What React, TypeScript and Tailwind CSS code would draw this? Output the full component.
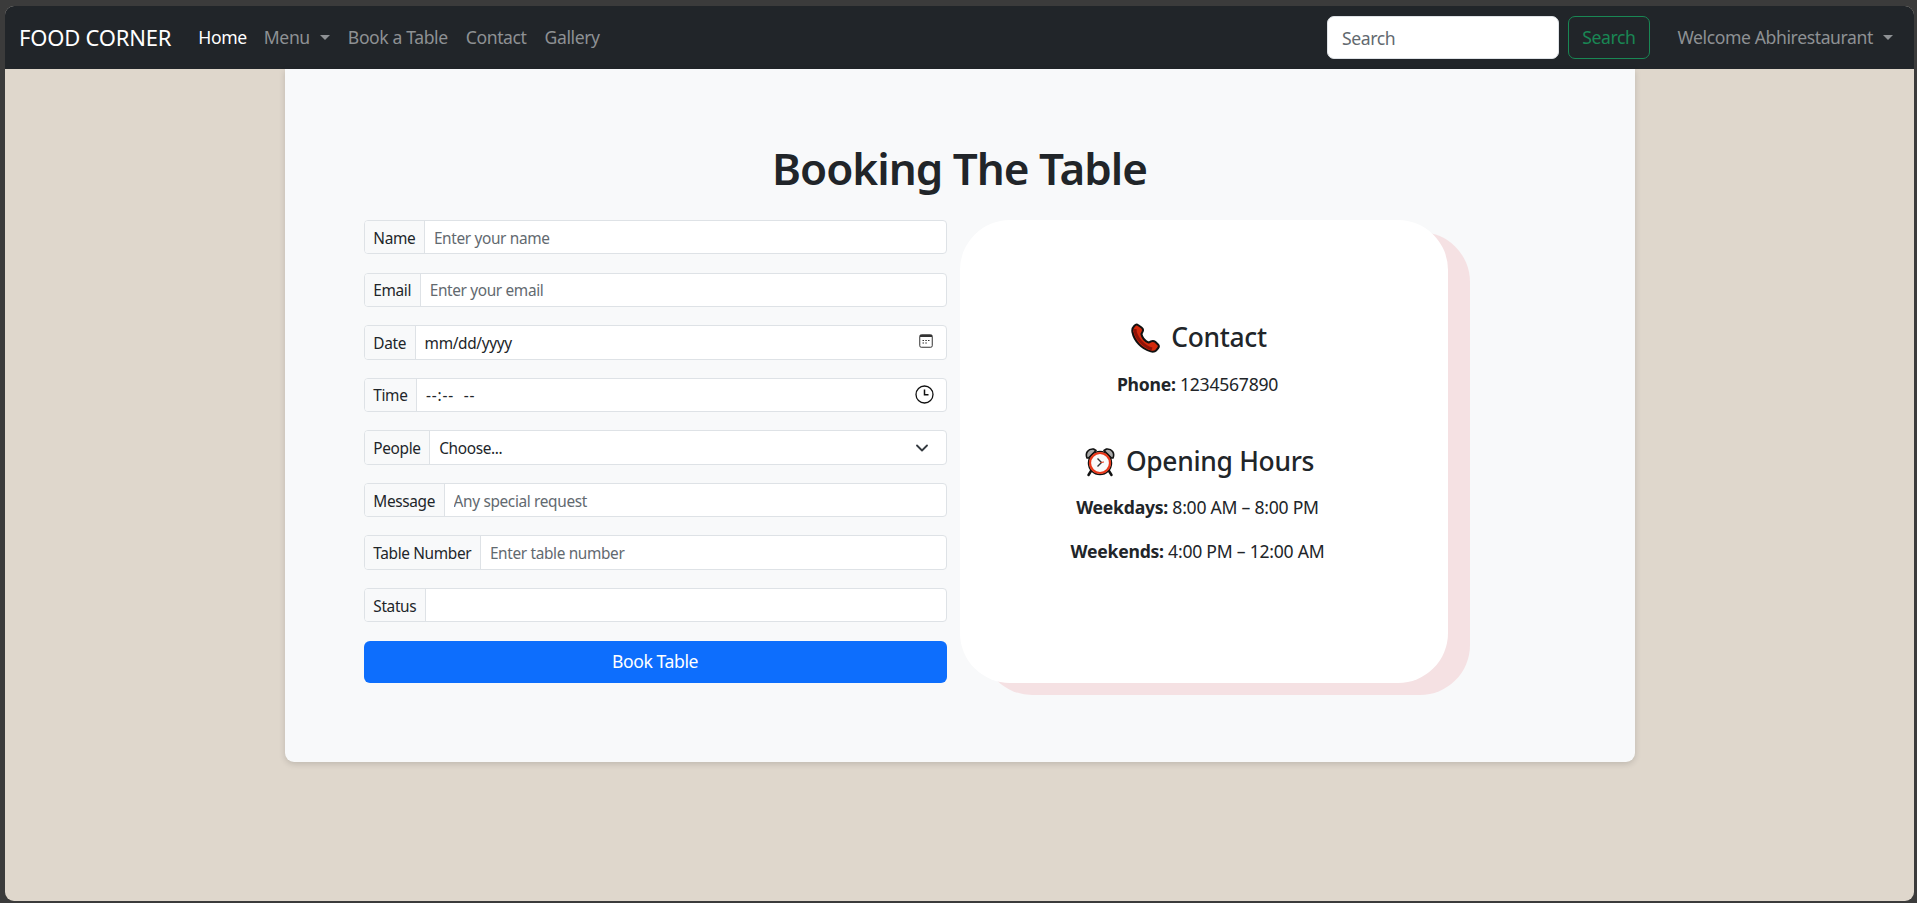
const font = "font-['Noto_Sans',sans-serif]"

const PhoneEmoji = () => (
  <svg width="29" height="30" viewBox="0 0 29 30" className="shrink-0">
    <path d="M7 2 L10.5 4.5 C12 5.6 12.4 7 11.6 8.6 L10.4 11 C11.2 14.8 14 18 17.6 19.6 L20 18.4 C21.6 17.6 23 17.8 24.2 18.8 L27 21.4 C28 22.4 28 23.8 27.2 25 L25.4 27.2 C24 28.6 22 29 19.8 28.4 C10.6 25.8 3.2 18 1.4 9 C1 6.6 1.6 4.6 3.2 3 L4.4 2 C5.2 1.4 6.2 1.4 7 2 Z" fill="#d42a0c" stroke="#111" strokeWidth="2" strokeLinejoin="round" />
    <path d="M4 6 C4 14 12 23 21 26" fill="none" stroke="#8e1208" strokeWidth="3" />
  </svg>
)

const ClockEmoji = () => (
  <svg width="30" height="30" viewBox="0 0 30 30" className="shrink-0">
    <path d="M2 11 C0 6 3 1.5 8.5 2 L11 3.5 L3.5 11 Z" fill="#a9a9a9" stroke="#111" strokeWidth="1.6" strokeLinejoin="round" />
    <path d="M28 11 C30 6 27 1.5 21.5 2 L19 3.5 L26.500 11 Z" fill="#a9a9a9" stroke="#111" strokeWidth="1.6" strokeLinejoin="round" />
    <path d="M6 24 L3.500 28 M24 24 L26.500 28" stroke="#111" strokeWidth="2.500" strokeLinecap="round" />
    <circle cx="15" cy="16" r="11.500" fill="#ffffff" stroke="#111" strokeWidth="1.500" />
    <circle cx="15" cy="16" r="10" fill="#fafafa" stroke="#e8381a" strokeWidth="2.200" />
    <path d="M12.500 11.500 L16.500 15.500 L12.500 19.500" fill="none" stroke="#333" strokeWidth="1.400" />
    <path d="M15.500 15.500 L19 15" stroke="#e8381a" strokeWidth="1" />
  </svg>
)

const CalendarIcon = () => (
  <svg width="14" height="14" viewBox="0 0 14 14" className="shrink-0 -mt-[3px]" fill="none">
    <rect x="0.75" y="0.75" width="12.5" height="12.5" rx="1.5" stroke="#333" strokeWidth="1" />
    <rect x="1" y="1" width="12" height="2" fill="#333" />
    <path d="M3.500 6.500h1.500M6.300 6.500h1.500M9 6.500h1.500M3.500 9h1.500M6.300 9h1.500" stroke="#333" strokeWidth="1.200" />
  </svg>
)

const ClockIcon = () => (
  <svg width="19" height="19" viewBox="0 0 19 19" className="shrink-0" fill="none">
    <circle cx="9.500" cy="9.500" r="8.500" stroke="#111" strokeWidth="1.300" />
    <path d="M9.500 4.500v5.300h4" stroke="#111" strokeWidth="1.500" />
  </svg>
)

const Chevron = () => (
  <svg width="12" height="8" viewBox="0 0 12 8" className="shrink-0" fill="none">
    <path d="M1 1.500l5 5 5-5" stroke="#343a40" strokeWidth="1.800" strokeLinecap="round" strokeLinejoin="round" />
  </svg>
)

const Caret = ({ className = '' }: { className?: string }) => (
  <span className={`inline-block w-0 h-0 border-x-[5px] border-x-transparent border-t-[5.300px] border-t-current ${className}`} />
)

const fields = [
  { label: 'Name', placeholder: 'Enter your name' },
  { label: 'Email', placeholder: 'Enter your email' },
  { label: 'Date', value: 'mm/dd/yyyy', icon: <CalendarIcon />, pr: 'pr-[13px]' },
  { label: 'Time', value: '--:--  --', icon: <ClockIcon />, pr: 'pr-[12px]', wide: true },
  { label: 'People', value: 'Choose...', icon: <Chevron />, pr: 'pr-[18px]' },
  { label: 'Message', placeholder: 'Any special request' },
  { label: 'Table Number', placeholder: 'Enter table number' },
  { label: 'Status', placeholder: '' },
]

const Field = ({ label, placeholder, value, icon, pr, wide }: any) => (
  <div className="flex h-[34.400px] mb-[18.200px] border border-[#dee2e6] rounded-[4px] bg-white overflow-hidden text-[15.400px] tracking-[-0.35px]">
    <span className="flex items-center px-[8.800px] pt-[2px] bg-[#f8f9fa] border-r border-[#dee2e6] text-[#212529]">{label}</span>
    <div className={`flex flex-1 items-center ${pr || ''}`}>
      <input
        readOnly
        value={value || ''}
        placeholder={placeholder}
        className={`flex-1 min-w-0 h-full px-[8.800px] pt-[2px] bg-transparent outline-none text-[#212529] placeholder:text-[#62696f] whitespace-pre ${wide ? 'tracking-[0.8px]' : ''}`}
      />
      {icon}
    </div>
  </div>
)

export default function App() {
  return (
    <div className={`${font} h-screen bg-[#3b3b3b] pt-[6px] pl-[5px] pr-[3px] pb-[2px]`}>
      <div className="h-full flex flex-col bg-[#dfd7cc] rounded-[9px] overflow-hidden">
        <nav className="flex items-center h-[63px] shrink-0 bg-[#212529] pl-[14px] pr-[21px] text-[17.600px] tracking-[-0.4px] text-[#8e9194]">
          <a className="text-white text-[22px] tracking-[-0.2px] mr-[27px]">FOOD CORNER</a>
          <a className="text-white mr-[17px]">Home</a>
          <a className="flex items-center mr-[18px]">Menu<Caret className="ml-[10px]" /></a>
          <a className="mr-[18px]">Book a Table</a>
          <a className="mr-[18px]">Contact</a>
          <a>Gallery</a>
          <div className="ml-auto flex items-center">
            <input
              readOnly
              placeholder="Search"
              className="w-[232px] h-[43px] px-[14px] rounded-[7px] bg-white outline-none border border-[#dee2e6] placeholder:text-[#62696f]"
            />
            <button className="w-[82px] h-[43px] ml-[9px] rounded-[7px] border border-[#198754] text-[#198754]">Search</button>
            <a className="flex items-center ml-[27.500px]">Welcome Abhirestaurant<Caret className="ml-[10px]" /></a>
          </div>
        </nav>
        <main className="w-[1350px] mx-auto pt-[73px] pb-[79px] pl-[79px] bg-[#f8f9fa] rounded-b-[9px] shadow-[0_2px_6px_rgba(0,0,0,0.15)]">
          <h1 className="h-[53px] mb-[25px] pr-[79px] text-center text-[44px] leading-[53px] font-semibold tracking-[-1px] text-[#212529]">Booking The Table</h1>
          <div className="flex gap-[13px] text-[#212529]">
            <form className="w-[583px]">
              {fields.map((f) => (
                <Field key={f.label} {...f} />
              ))}
              <button type="button" className="block w-full h-[42px] rounded-[6px] bg-[#0d6efd] text-white text-[17.600px] tracking-[-0.4px]">Book Table</button>
            </form>
            <section className="w-[488px] h-[463px] pt-[102px] pr-[12px] rounded-[50px] bg-white shadow-[22px_12px_0_#f5e1e3] text-center text-[17.600px] tracking-[-0.25px]">
              <h4 className="flex items-center justify-center gap-[11px] h-[32px] pl-[3px] text-[26.400px] font-medium tracking-[-0.3px]"><PhoneEmoji />Contact</h4>
              <p className="mt-[17px] leading-[26px]"><b>Phone:</b> 1234567890</p>
              <h4 className="flex items-center justify-center gap-[11px] h-[32px] pl-[4px] mt-[49px] text-[26.400px] font-medium tracking-[-0.3px]"><ClockEmoji />Opening Hours</h4>
              <p className="mt-[16px] leading-[26px]"><b>Weekdays:</b> 8:00 AM – 8:00 PM</p>
              <p className="mt-[18px] leading-[26px]"><b>Weekends:</b> 4:00 PM – 12:00 AM</p>
            </section>
          </div>
        </main>
      </div>
    </div>
  )
}
